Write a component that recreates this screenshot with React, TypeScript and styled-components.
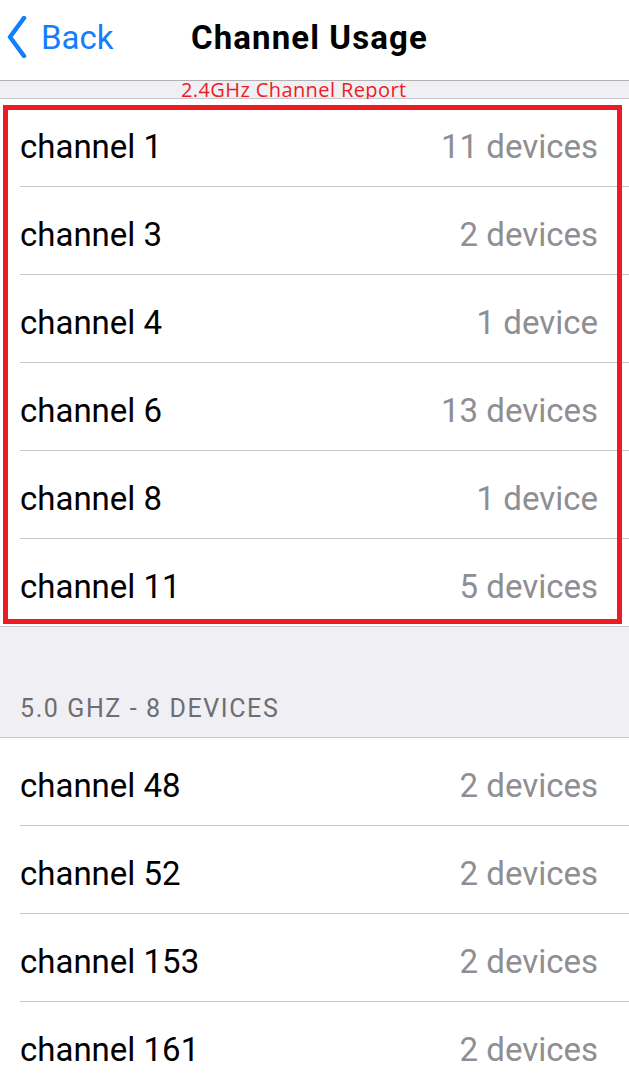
import React from 'react';
import styled, { createGlobalStyle } from 'styled-components';

const GlobalStyle = createGlobalStyle`
  html, body {
    margin: 0;
    padding: 0;
    background: #efeff4;
    font-family: Roboto, 'Liberation Sans', sans-serif;
  }
`;

const Screen = styled.div`
  width: 629px;
  min-height: 1089px;
  background: #efeff4;
  overflow: hidden;
`;

const NavBar = styled.div`
  height: 80px;
  background: #fff;
  border-bottom: 1px solid #b2b2b2;
  display: grid;
  grid-template-columns: 1fr auto 1fr;
  align-items: center;
`;

const BackButton = styled.div`
  display: flex;
  align-items: center;
  gap: 14px;
  padding-left: 7px;
  color: #147efb;
  font-size: 33px;
  margin-top: -6px;
`;

const Title = styled.div`
  font-size: 33px;
  font-weight: 700;
  letter-spacing: 1.1px;
  color: #000;
  margin-top: -6px;
  margin-right: 10px;
`;

const ReportBand = styled.div`
  height: 17px;
  border-bottom: 1px solid #c8c7cc;
  display: flex;
  align-items: center;
  padding-left: 181px;
  color: #ed1c24;
  font-family: 'Open Sans', 'Liberation Sans', sans-serif;
  font-size: 20px;
  letter-spacing: 0.4px;
  line-height: 17px;
  white-space: nowrap;
`;

const Section = styled.div<{ $marked?: boolean }>`
  position: relative;
  background: #fff;
  border-bottom: 1px solid #c8c7cc;

  ${({ $marked }) =>
    $marked &&
    `
    &::after {
      content: '';
      position: absolute;
      top: 6px;
      left: 3px;
      right: 7px;
      bottom: 2px;
      border: 5px solid #ed1c24;
      pointer-events: none;
    }
  `}
`;

const Row = styled.div`
  height: 87px;
  margin-left: 20px;
  padding-right: 31px;
  display: flex;
  align-items: center;
  justify-content: space-between;
  border-bottom: 1px solid #c8c7cc;

  &:last-child {
    border-bottom: none;
  }
`;

const Label = styled.span`
  font-size: 33px;
  color: #000;
  padding-top: 8px;
`;

const Count = styled.span`
  font-size: 33px;
  color: #8e8e93;
  padding-top: 8px;
`;

const SectionHeader = styled.div`
  height: 111px;
  border-bottom: 1px solid #c8c7cc;
  display: flex;
  align-items: flex-end;
  padding: 0 0 14px 20px;
  box-sizing: border-box;
  font-size: 25px;
  letter-spacing: 1.6px;
  color: #6d6d72;
  text-transform: uppercase;
`;

const Chevron = () => (
  <svg width="20" height="42" viewBox="0 0 20 42">
    <path
      d="M17 2 L3 21 L17 40"
      fill="none"
      stroke="#147efb"
      strokeWidth="4.5"
      strokeLinecap="round"
      strokeLinejoin="round"
    />
  </svg>
);

const band24 = [
  { ch: 1, n: 11 },
  { ch: 3, n: 2 },
  { ch: 4, n: 1 },
  { ch: 6, n: 13 },
  { ch: 8, n: 1 },
  { ch: 11, n: 5 },
];

const band50 = [
  { ch: 48, n: 2 },
  { ch: 52, n: 2 },
  { ch: 153, n: 2 },
  { ch: 161, n: 2 },
];

const devices = (n: number) => `${n} ${n === 1 ? 'device' : 'devices'}`;

const App = () => (
  <Screen>
    <GlobalStyle />
    <NavBar>
      <BackButton>
        <Chevron />
        Back
      </BackButton>
      <Title>Channel Usage</Title>
      <div />
    </NavBar>
    <ReportBand>2.4GHz Channel Report</ReportBand>
    <Section $marked>
      {band24.map(({ ch, n }) => (
        <Row key={ch}>
          <Label>channel {ch}</Label>
          <Count>{devices(n)}</Count>
        </Row>
      ))}
    </Section>
    <SectionHeader>5.0 GHz - 8 devices</SectionHeader>
    <Section>
      {band50.map(({ ch, n }) => (
        <Row key={ch}>
          <Label>channel {ch}</Label>
          <Count>{devices(n)}</Count>
        </Row>
      ))}
    </Section>
  </Screen>
);

export default App;
